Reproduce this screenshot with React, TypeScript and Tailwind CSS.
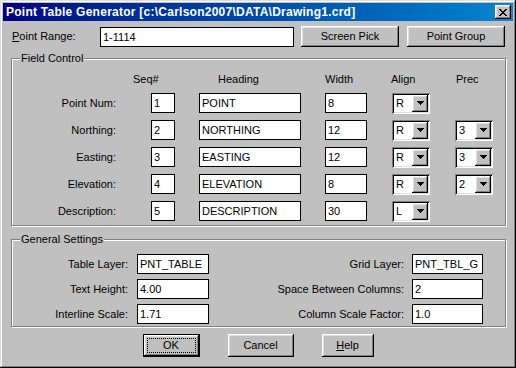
import React from 'react';

const raised =
  'bg-[#c0c0c0] shadow-[inset_-1px_-1px_0_#000,inset_1px_1px_0_#fff,inset_-2px_-2px_0_#808080,inset_2px_2px_0_#dfdfdf]';
const sunken =
  'shadow-[inset_1px_1px_0_#808080,inset_-1px_-1px_0_#fff,inset_2px_2px_0_#000,inset_-2px_-2px_0_#dfdfdf]';

type Field = { label: string; seq: string; heading: string; width: string; align: string; prec?: string };

const fields: Field[] = [
  { label: 'Point Num:', seq: '1', heading: 'POINT', width: '8', align: 'R' },
  { label: 'Northing:', seq: '2', heading: 'NORTHING', width: '12', align: 'R', prec: '3' },
  { label: 'Easting:', seq: '3', heading: 'EASTING', width: '12', align: 'R', prec: '3' },
  { label: 'Elevation:', seq: '4', heading: 'ELEVATION', width: '8', align: 'R', prec: '2' },
  { label: 'Description:', seq: '5', heading: 'DESCRIPTION', width: '30', align: 'L' },
];

const settings = [
  { left: 'Table Layer:', lval: 'PNT_TABLE', right: 'Grid Layer:', rval: 'PNT_TBL_G' },
  { left: 'Text Height:', lval: '4.00', right: 'Space Between Columns:', rval: '2' },
  { left: 'Interline Scale:', lval: '1.71', right: 'Column Scale Factor:', rval: '1.0' },
];

const TextBox = ({ value, className = '' }: { value: string; className?: string }) => (
  <div className={`h-[20px] border border-black bg-white pl-[2px] leading-[18px] whitespace-nowrap overflow-hidden ${className}`}>
    {value}
  </div>
);

const Combo = ({ value }: { value: string }) => (
  <div className={`w-[38px] h-[21px] bg-white flex p-[2px] ${sunken}`}>
    <span className="flex-1 pl-[2px] leading-[17px]">{value}</span>
    <div className={`w-[16px] h-full flex items-center justify-center ${raised}`}>
      <svg width="7" height="4" shapeRendering="crispEdges">
        <polygon points="0,0 7,0 3.5,4" fill="#000" />
      </svg>
    </div>
  </div>
);

const Button = ({ children, className = '' }: { children: React.ReactNode; className?: string }) => (
  <div className={`h-[21px] flex items-center justify-center ${raised} ${className}`}>{children}</div>
);

const GroupBox = ({ title, className = '', children }: { title: string; className?: string; children: React.ReactNode }) => (
  <div className={`relative border border-[#808080] shadow-[1px_1px_0_#fff,inset_1px_1px_0_#fff] ${className}`}>
    <span className="absolute left-[8px] top-[-7px] bg-[#c0c0c0] px-[1px] leading-[13px]">{title}</span>
    {children}
  </div>
);

export default function App() {
  return (
    <div className="w-[516px] h-[368px] bg-[#c0c0c0] p-[3px] flex flex-col text-[11px] leading-[13px] text-black font-['Liberation_Sans',Arial,sans-serif] shadow-[inset_-1px_-1px_0_#000,inset_1px_1px_0_#dfdfdf,inset_-2px_-2px_0_#808080,inset_2px_2px_0_#fff]">
      {/* title bar */}
      <div className="h-[18px] flex items-center bg-linear-to-r from-[#000080] to-[#1084d0] pl-[3px] pr-[2px]">
        <span className="flex-1 text-white font-bold text-[12px] tracking-[0.25px] whitespace-nowrap">
          Point Table Generator [c:\Carlson2007\DATA\Drawing1.crd]
        </span>
        <div className={`w-[16px] h-[14px] flex items-center justify-center ${raised}`}>
          <svg width="8" height="7" shapeRendering="crispEdges">
            <path d="M0 0h2l2 2.5L6 0h2L5 3.5 8 7H6L4 4.5 2 7H0l3-3.5z" fill="#000" />
          </svg>
        </div>
      </div>

      {/* point range */}
      <div className="flex items-center h-[21px] mt-[5px] pl-[9px]">
        <span className="w-[88px]">
          <span className="underline">P</span>oint Range:
        </span>
        <TextBox value="1-1114" className="w-[194px]" />
        <Button className="w-[98px] ml-[7px]">Screen Pick</Button>
        <Button className="w-[98px] ml-[8px]">Point Group</Button>
      </div>

      {/* field control */}
      <GroupBox title="Field Control" className="ml-[8px] mt-[11px] w-[495px] h-[168px]">
        <div className="flex pt-[14px] whitespace-nowrap">
          <span className="ml-[121px] w-[85px]">Seq#</span>
          <span className="w-[107px]">Heading</span>
          <span className="w-[66px]">Width</span>
          <span className="w-[65px]">Align</span>
          <span>Prec</span>
        </div>
        <div className="flex flex-col gap-[7px] mt-[7px]">
          {fields.map((f) => (
            <div key={f.label} className="flex items-center h-[20px]">
              <span className="w-[104px] text-right">{f.label}</span>
              <TextBox value={f.seq} className="ml-[35px] w-[24px]" />
              <TextBox value={f.heading} className="ml-[24px] w-[102px]" />
              <TextBox value={f.width} className="ml-[24px] w-[42px]" />
              <div className="ml-[25px]">
                <Combo value={f.align} />
              </div>
              {f.prec && (
                <div className="ml-[25px]">
                  <Combo value={f.prec} />
                </div>
              )}
            </div>
          ))}
        </div>
      </GroupBox>

      {/* general settings */}
      <GroupBox title="General Settings" className="ml-[8px] mt-[13px] w-[495px] h-[88px]">
        <div className="flex flex-col gap-[5px] pt-[14px]">
          {settings.map((s) => (
            <div key={s.left} className="flex items-center h-[20px] whitespace-nowrap">
              <span className="w-[116px] text-right">{s.left}</span>
              <TextBox value={s.lval} className="ml-[9px] w-[72px]" />
              <span className="w-[195px] text-right">{s.right}</span>
              <TextBox value={s.rval} className="ml-[8px] w-[71px]" />
            </div>
          ))}
        </div>
      </GroupBox>

      {/* buttons */}
      <div className="flex justify-center gap-[28px] mt-[7px]">
        <div className="w-[57px] h-[23px] border border-black">
          <div className={`w-full h-full p-[3px] ${raised}`}>
            <div className="w-full h-full border border-dotted border-black flex items-center justify-center">OK</div>
          </div>
        </div>
        <Button className="w-[66px] h-[23px]">Cancel</Button>
        <Button className="w-[52px] h-[23px]">
          <span>
            <span className="underline">H</span>elp
          </span>
        </Button>
      </div>
    </div>
  );
}
